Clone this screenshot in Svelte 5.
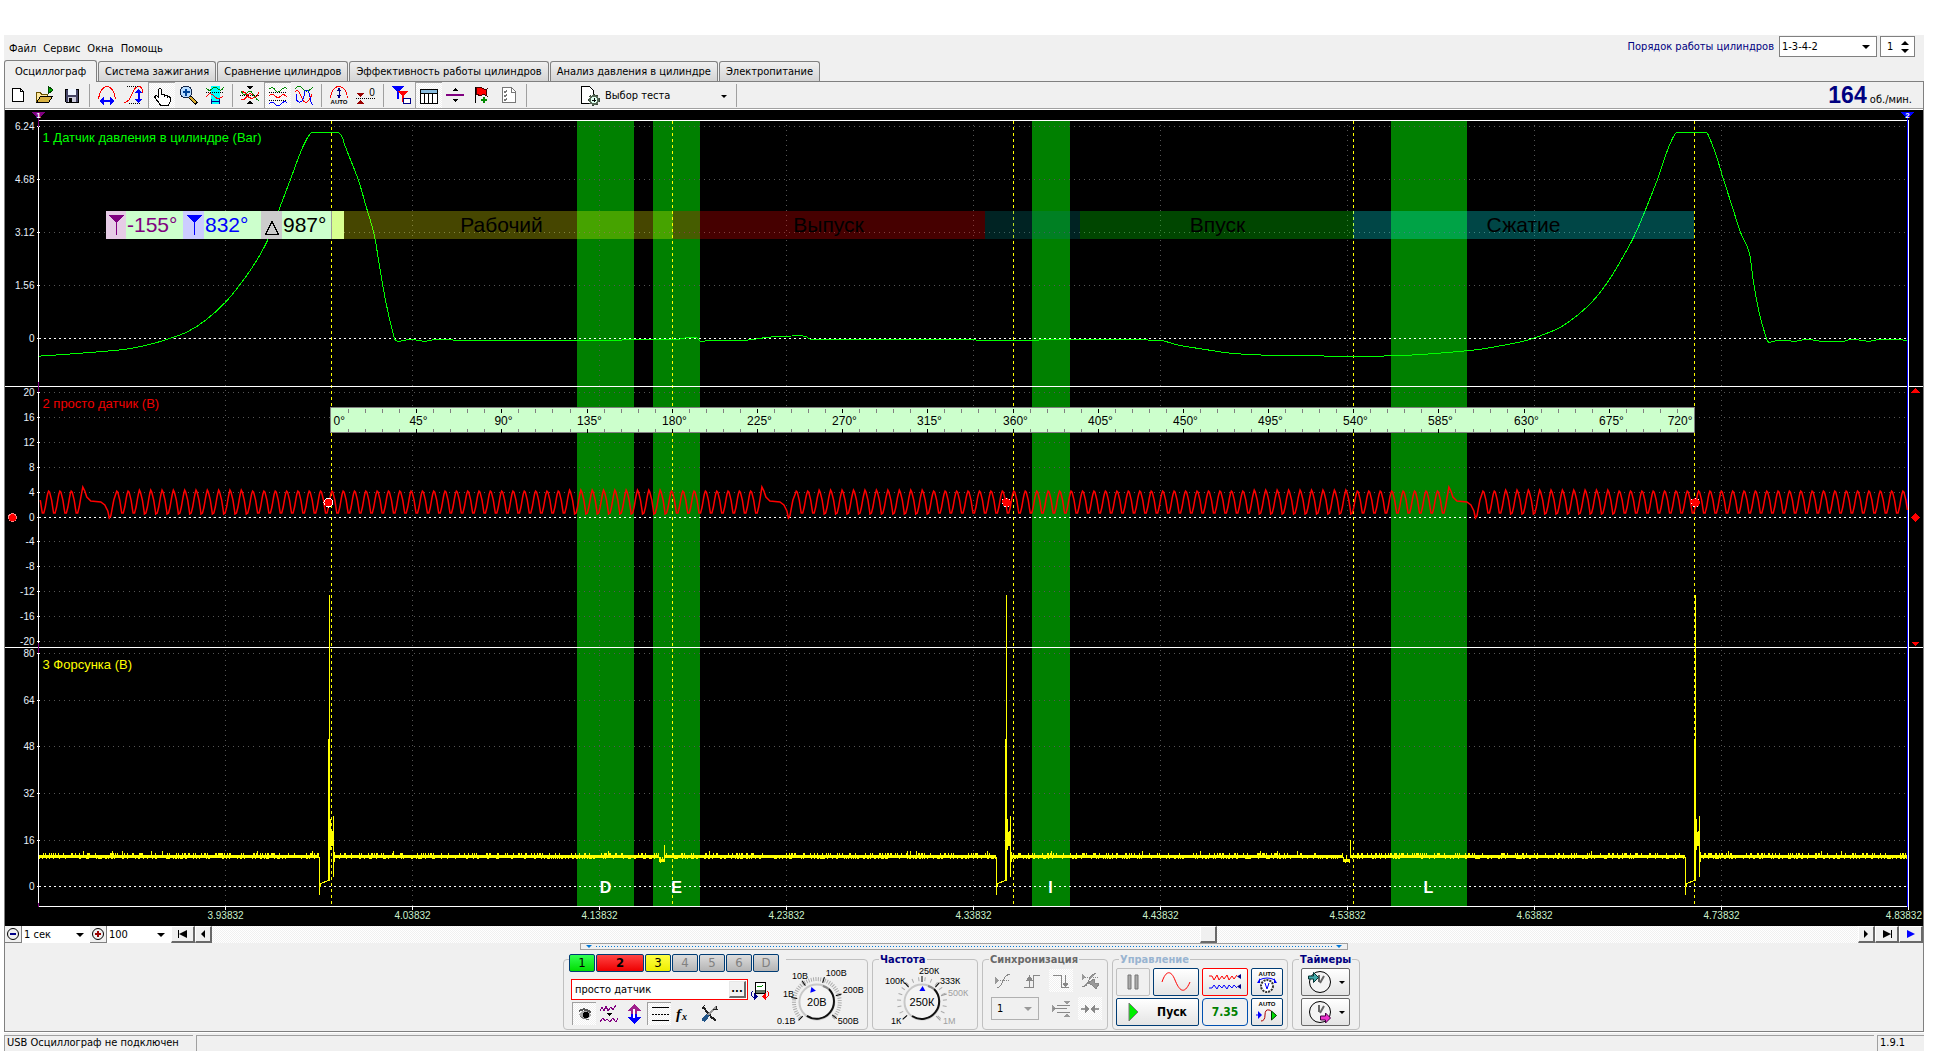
<script>
  let chartWidth = 1918;
  let chartHeight = 817;

  let activeTab = 0;
  let activeChannel = 2;
  let order = '1-3-4-2';
  let firstCylinder = 1;
  let channelName = 'просто датчик';
  let timeScale = '1 сек';
  let zoomScale = '100';
  let syncChannel = '1';

  const menu = ['Файл', 'Сервис', 'Окна', 'Помощь'];
  const tabs = [
    'Осциллограф',
    'Система зажигания',
    'Сравнение цилиндров',
    'Эффективность работы цилиндров',
    'Анализ давления в цилиндре',
    'Электропитание'
  ];

  const toolGroups = [
    [['new', 'Новый'], ['open', 'Открыть'], ['save', 'Сохранить']],
    [['width', 'Ширина'], ['height', 'Высота'], ['hand', 'Рука', true], ['zoom', 'Лупа'], ['zone', 'Зона']],
    [['cross', 'Совместить'], ['split', 'Разделить', true], ['overlay', 'Наложить']],
    [['auto', 'Авто'], ['zero', 'Ноль']],
    [['filter', 'Фильтр'], ['table', 'Таблица', true], ['level', 'Уровень'], ['flag', 'Метка'], ['list', 'Список']]
  ];

  const channels = [
    { id: '1', color: 'green' },
    { id: '2', color: 'red' },
    { id: '3', color: 'yellow' },
    { id: '4' },
    { id: '5' },
    { id: '6' },
    { id: 'D' }
  ];

  const channelTools = [['eye', 'Показать', true], ['noise', 'Шум'], ['updown', 'Сдвиг'], ['lines', 'Линии', true], ['fx', 'Функция'], ['tools', 'Настройки']];

  // icons, 20x20
  const icons = {
    new: '<path d="M4.5 3.5h8l3 3v10h-11z" fill="#fff" stroke="#000"/><path d="M12.5 3.5v3h3" fill="none" stroke="#000"/>',
    open: '<path d="M1.500 17.500V7.500h4l1 2h6v3" fill="#ffe9a0" stroke="#6b5200"/><path d="M1.500 17.500l4-6h12l-4 6z" fill="#d8b040" stroke="#000"/><path d="M13 1v8l5-4z" fill="#0a0" stroke="#040"/>',
    save: '<path d="M3 4h13v13H4l-1-1z" fill="#446" stroke="#000"/><path d="M6 4h8v6H6z" fill="#eef4ff"/><path d="M6 12h8v5H6z" fill="#ccd"/><path d="M7 13h3v4H7z" fill="#000"/>',
    width: '<path d="M1.500 14C2 9 5 1.500 10 1.500S18 9 18.500 14" fill="none" stroke="red"/><path d="M4 16h12" stroke="#00f" stroke-width="2"/><path d="M7 12v8l-5-4zM13 12v8l5-4z" fill="#00f"/>',
    height: '<path d="M0 17.500C9 17 7 1.500 15 1.500q3 0 4 6" fill="none" stroke="red"/><path d="M3 1.500h12M5 18.500h12" stroke="#000" stroke-dasharray="1 1"/><path d="M14.500 5v11" stroke="#00f" stroke-width="2"/><path d="M11 8h7l-3.500-4zM11 14h7l-3.500 4z" fill="#00f"/>',
    hand: '<path d="M6.500 12V3.500q1.500-2 3 0V9M9.500 9q1-2 3 0v1q1.500-1 3 0v1q2-1 3 1v3l-2 4h-8l-3-4-3-4q1-2 3-.5l1 1.500" fill="#fff" stroke="#000"/>',
    zoom: '<path d="M12 12l7 7" stroke="#000" stroke-width="4"/><path d="M12 12l6 6" stroke="#d9a92b" stroke-width="2"/><circle cx="8" cy="7" r="6" fill="#b8dcff" stroke="#124"/><path d="M8 3.500v7M4.500 7h7" stroke="#049" stroke-width="2"/>',
    zone: '<path d="M6 1h9v18H6z" fill="#0ff"/><path d="M1 3q3 4 6 1t6 0 6-2" fill="none" stroke="#080"/><path d="M1 7.500h18" stroke="#000" stroke-dasharray="1 1"/><path d="M1 12q4-6 8-1t9 0" fill="none" stroke="red"/><path d="M6.500 14v5M14.500 14v5M7 16.500h7" stroke="#008"/>',
    cross: '<path d="M1 7q4-1 6 3t6 3 6-6M1 13" fill="none" stroke="red"/><path d="M1 6q3 6 6 2t6 1 6 7" fill="none" stroke="#080"/><path d="M1 15q4 0 6-4t6-1" fill="none" stroke="red"/><path d="M0 10.500h20" stroke="#000" stroke-dasharray="1 1"/><path d="M7 1h6l-3 4zM7 19h6l-3-4z" fill="#000"/>',
    split: '<path d="M1 3q4-3 6 1t6 0 6-1" fill="none" stroke="#080"/><path d="M1 6.500h18M1 14.500h18" stroke="#000" stroke-dasharray="1 1"/><path d="M1 10q3-3 6 0t6 0 6 1" fill="none" stroke="red"/><path d="M1 18q3-4 6 0t6 0 6-1" fill="none" stroke="#00f"/>',
    overlay: '<path d="M1 4q4-5 8 0t10-2" fill="none" stroke="#080"/><path d="M1 7q3-4 6 4t6 6 5-8" fill="none" stroke="red"/><path d="M2 9q0 9 4 8t5-11q4-3 5 6t3 7" fill="none" stroke="#00f"/>',
    auto: '<path d="M1.500 13C2 7 5 1.500 10 1.500S18 7 18.500 13" fill="none" stroke="red"/><path d="M10 4v8" stroke="#008"/><path d="M7.500 6h5L10 2.500zM7.500 10h5L10 13.500z" fill="#008"/><text x="10" y="19" class="tiny">AUTO</text>',
    zero: '<path d="M0 13.500h19" stroke="#000" stroke-dasharray="1 1"/><path d="M1 8h7l-3.500 4zM1 19h7l-3.500-4z" fill="#900"/><text x="16" y="11" class="digit">0</text>',
    filter: '<path d="M1 1h12l-5 6v7H6V7z" fill="#00f"/><path d="M7 6h10l-4 5v6h-2v-6z" fill="red"/><path d="M12.500 13.500h7v5h-7z" fill="#fff" stroke="#008"/>',
    table: '<path d="M1.500 3.500h17v14h-17z" fill="#fff" stroke="#000"/><path d="M2 4h16v3H2z" fill="#8bd"/><path d="M1 7.500h18M5.500 7v10M9.500 7v10M13.500 7v10" stroke="#000"/>',
    level: '<path d="M1 9h18v2H1z" fill="#800080"/><path d="M7 6h6l-3-3zM7 14h6l-3 3z" fill="#000"/>',
    flag: '<path d="M3.500 2v16" stroke="#000"/><path d="M4 3q3-2 6 0t5 1l-1 4 1 3q-3-2-5-1t-6-1z" fill="red" stroke="#400"/><path d="M12 12v6M9 15h6" stroke="#080" stroke-width="2"/>',
    list: '<path d="M3.500 2.500h9l4 4v11h-13z" fill="#fff" stroke="#777"/><path d="M12 2v5h4M5 6l1 2 2-3M5 10l1 2 2-3M5 14l1 2 2-3" fill="none" stroke="#777"/>',
    test: '<path d="M1.500 .5h8l4 4v13h-12z" fill="#fff" stroke="#000"/><circle cx="14" cy="14" r="4" fill="#dfe" stroke="#565" stroke-width="2"/><circle cx="14" cy="14" r="5.500" fill="none" stroke="#343" stroke-dasharray="2 2"/><path d="M14 12v4M12 14h4" stroke="#000"/>',
    eye: '<path d="M4 10q6-7 12 1-3 5-9 4z" fill="#aaa"/><path d="M4 7q6-4 12 2" fill="none" stroke="#555" stroke-width="2"/><circle cx="11" cy="11" r="3" fill="#000"/><path d="M5 12q4 4 9 3" fill="none" stroke="#777"/>',
    noise: '<path d="M1 7l2-4 2 4 2-5 2 5 3-4 2 3 3-5M1 18l3-4 2 3 2-2 3 3 3-4 3 4 2-4" fill="none" stroke="#800080"/><path d="M7 9h6l-3 3z" fill="#000"/>',
    updown: '<path d="M10 0l7 7h-4v3H7V7H3z" fill="#a0208c"/><path d="M10 20l7-7h-4v-3H7v3H3z" fill="#00f"/><path d="M10 5v9" stroke="#fff" stroke-width="2"/>',
    lines: '<path d="M2 3.500h17M2 16.500h17" stroke="#000"/><path d="M2 10.500h17" stroke="#000" stroke-dasharray="2 1"/>',
    fx: '<text x="2" y="15" class="fx">f</text><text x="8" y="16" class="fx small">x</text>',
    tools: '<path d="M4 3l10 12M14 14l3 3" stroke="#222" stroke-width="2"/><path d="M17 3L8 12" stroke="#999" stroke-width="2"/><path d="M17 2v4M14 5h5M3 5l3-4" stroke="#222"/><path d="M9 11l-5 6" stroke="#258" stroke-width="4"/>',
    device: '<path d="M5.500 1.500h10v11h-10z" fill="#fff" stroke="#000"/><path d="M6 9h9v3H6z" fill="#676"/><path d="M7 6l2-1 2 1 2-2" fill="none" stroke="#080"/><path d="M3 10q-4 3 0 6h2" fill="none" stroke="#008"/><path d="M4 12v7l4-3.500z" fill="#008"/><path d="M17 10q4 3 0 6h-2" fill="none" stroke="red"/><path d="M16 12v7l-4-3.500z" fill="red"/>',
    edge: '<path d="M3 9.500h14" stroke="#888" stroke-dasharray="1 1"/><path d="M2 6v7l4-3z" fill="#999"/><path d="M4 17q4-1 6-7t7-7" fill="none" stroke="#888"/>',
    rise: '<path d="M2 16.500h9V4.500h7" fill="none" stroke="#888"/><path d="M7.500 7v9M5 9h5L7.500 5z" fill="#888" stroke="#888"/>',
    fall: '<path d="M2 4.500h8v12h8" fill="none" stroke="#888"/><path d="M14.500 4v9M12 12h5l-2.500 4z" fill="#888" stroke="#888"/>',
    bolt: '<path d="M2 3v6l4-3z" fill="#999"/><path d="M5 6.500h13" stroke="#888" stroke-dasharray="1 1"/><path d="M2 16q5 0 7-7t7-6M8 12l6-4 1 4 4 1-3 5-4-4z" fill="#999" stroke="#888"/>',
    limits: '<path d="M1 6v7l4-3zM13 2h6l-3 4zM13 18h6l-3-4z" fill="#999"/><path d="M6 6.500h13M6 13.500h13M2 9.500h14" stroke="#888"/>',
    merge: '<path d="M1 10h8M19 10h-8" stroke="#999" stroke-width="2"/><path d="M5 6v8l5-4zM15 6v8l-5-4z" fill="#888"/>'
  };

  const knobs = {
    volts: {
      value: '20В',
      pointer: -20,
      dense: true,
      labels: [
        ['0.1В', 2, 60, 225], ['1В', 8, 33, 280], ['10В', 17, 15, 325],
        ['100В', 51, 12, 17], ['200В', 68, 29, 72], ['500В', 63, 60, 130]
      ]
    },
    rate: {
      value: '250К',
      pointer: 2,
      dense: false,
      labels: [
        ['1К', 11, 60, 228], ['100К', 5, 20, 318], ['250К', 39, 10, 0],
        ['333К', 60, 20, 42], ['500К', 68, 32, 72, true], ['1М', 63, 60, 135, true]
      ]
    }
  };

  // plot geometry: 1870 samples between the first and the last time mark
  const SAMPLES = 1870;
  const LEFT = 33;
  $: kx = (chartWidth - 48) / SAMPLES;
  $: ky = chartHeight / 817;
  $: X = (s) => Math.round(LEFT + s * kx) + 0.5;
  $: Y = (v) => Math.round(v * ky) + 0.5;

  const panels = [
    { title: '1 Датчик давления в цилиндре (Bar)', color: '#00ff00', titleY: 31, zero: 228, first: 16, step: 53, marks: ['6.24', '4.68', '3.12', '1.56', '0'] },
    { title: '2 просто датчик (В)', color: '#f00000', titleY: 297, zero: 407, first: 282, step: 25, marks: ['20', '16', '12', '8', '4', '0', '-4', '-8', '-12', '-16', '-20'] },
    { title: '3 Форсунка (В)', color: '#ffff00', titleY: 559, zero: 777, first: 544, step: 46.6, marks: ['80', '64', '48', '32', '16', '0'] }
  ];
  const dividers = [276, 538];
  const times = ['3.93832', '4.03832', '4.13832', '4.23832', '4.33832', '4.43832', '4.53832', '4.63832', '4.73832', '4.83832'];

  const DEGREE_ZERO = 293;
  const angle = (deg) => DEGREE_ZERO + (deg * 1363) / 720;

  const zones = [
    { label: 'D', from: 539, to: 596 },
    { label: 'E', from: 615, to: 662 },
    { label: 'I', from: 994, to: 1032 },
    { label: 'L', from: 1353, to: 1429 }
  ];
  const strokes = [
    { label: 'Рабочий', from: 293, to: 635, color: '#ffff00', center: 463 },
    { label: 'Выпуск', from: 635, to: 947, color: '#ff0000', center: 790 },
    { label: '', from: 947, to: 1042, color: '#008080', center: 0 },
    { label: 'Впуск', from: 1042, to: 1315, color: '#00ff00', center: 1179 },
    { label: 'Сжатие', from: 1315, to: 1656, color: '#00ffff', center: 1485 }
  ];

  const pressure = [
    [0, 246], [29, 244], [55, 242], [87, 239], [112, 234], [132, 228], [150, 221], [167, 210], [187, 192], [204, 171],
    [217, 152], [230, 128], [241, 98], [252, 69], [262, 42], [268, 29], [273, 22], [275, 22], [299, 22], [301, 23],
    [304, 27], [306, 34], [320, 70], [327, 94], [336, 126], [342, 162], [347, 190], [353, 217], [357, 230], [366, 230],
    [372, 229], [386, 231], [398, 229], [420, 230], [577, 230], [600, 229], [640, 229], [645, 228], [657, 227], [662, 231],
    [672, 230], [707, 230], [730, 227], [747, 226], [767, 226], [772, 229], [932, 229], [940, 230], [1120, 230], [1140, 235],
    [1165, 239], [1192, 243], [1227, 245], [1330, 246], [1370, 245], [1400, 243], [1442, 239], [1485, 231], [1495, 228],
    [1520, 218], [1539, 205], [1555, 190], [1567, 175], [1579, 156], [1597, 123], [1619, 69], [1627, 45], [1634, 28],
    [1638, 22], [1640, 22], [1667, 22], [1669, 23], [1677, 43], [1685, 69], [1694, 97], [1702, 122], [1711, 143], [1715, 172],
    [1721, 204], [1728, 228], [1730, 232], [1735, 231], [1744, 230], [1757, 231], [1769, 229], [1782, 231], [1805, 231],
    [1813, 229], [1830, 231], [1842, 229], [1869, 230]
  ];

  // crank sensor: 60-2 wheel
  const turns = [[-634, 11.3], [44.3, 11.32], [723.4, 11.45], [1410.4, 11.35]];
  const gap = [[0, 377], [2, 381], [4, 387], [8, 391], [18, 392], [22, 395], [25, 401], [26.5, 408], [28, 406], [31, 390]];
  const crank = [];
  for (const [start, period] of turns) {
    gap.forEach(([dx, y]) => crank.push([start + dx, y]));
    for (let tooth = 3; tooth < 60; tooth++) {
      const peak = start + tooth * period;
      const grow = Math.sin(tooth / 6) > 0.7 ? 1 : 0;
      [[-1, 384], [0, 381 - grow], [1, 382], [3, 390], [4.500, 400], [5, 403 + grow], [6.500, 403], [8, 397], [9.500, 388]]
        .forEach(([dx, y]) => crank.push([peak + dx, y]));
    }
  }
  const crankVisible = crank.filter(([s]) => s >= 0 && s <= 1869);

  // injector: noisy battery level with three pulses
  const pulses = [281, 958, 1647];
  let seed = 7;
  const random = () => {
    seed = (seed * 16807) % 2147483647;
    return seed / 2147483647;
  };
  const level = [];
  for (let s = 1; s < 1869; s++) {
    if (pulses.some((p) => s >= p && s < p + 15)) continue;
    const r = random();
    const dip = (s > 620 && s < 627) || (s > 1304 && s < 1312) ? 4 : 0;
    const top = r > 0.985 ? 741 : r > 0.75 ? 743 : 745;
    const bottom = random() > 0.7 ? 749 : 748;
    level.push([s, top + dip, bottom + dip]);
  }
  level.push([626, 735, 750], [1312, 730, 748]);

  $: line = (points) => points.map(([s, y]) => `${LEFT + s * kx + 0.5},${y * ky + 0.5}`).join(' ');

  // Catmull-Rom through the points
  $: curve = (points) => {
    const p = points.map(([s, y]) => [LEFT + s * kx + 0.5, y * ky + 0.5]);
    let d = `M${p[0]}`;
    for (let i = 0; i < p.length - 1; i++) {
      const a = p[Math.max(i - 1, 0)];
      const b = p[i];
      const c = p[i + 1];
      const e = p[Math.min(i + 2, p.length - 1)];
      const limit = (c[0] - b[0]) / 3;
      const t1 = limit / Math.max(c[0] - a[0], 1);
      const t2 = limit / Math.max(e[0] - b[0], 1);
      d += `C${b[0] + limit} ${b[1] + (c[1] - a[1]) * t1} ${c[0] - limit} ${c[1] - (e[1] - b[1]) * t2} ${c}`;
    }
    return d;
  };

  $: levelPath = level.map(([s, a, b]) => `M${X(s)} ${Y(a)}V${Y(b)}`).join('');
  $: pulsePath = pulses
    .map((p) => `M${X(p)} ${Y(747)}V${Y(785)}M${X(p + 1)} ${Y(777)}V${Y(774)}L${X(p + 9)} ${Y(771)}M${X(p + 10)} ${Y(771)}V${Y(485)}M${X(p + 9)} ${Y(771)}V${Y(629)}M${X(p + 11)} ${Y(709)}V${Y(740)}M${X(p + 12)} ${Y(722)}V${Y(736)}M${X(p + 13)} ${Y(721)}V${Y(736)}M${X(p + 14)} ${Y(706)}V${Y(767)}M${X(p + 15)} ${Y(742)}V${Y(752)}`)
    .join('');

  const toothMarks = [290, 968, 1657];
</script>

{#snippet icon(name)}
  <svg class="icon" viewBox="0 0 20 20" aria-hidden="true">{@html icons[name]}</svg>
{/snippet}

{#snippet knob(k)}
  <svg class="knob" viewBox="0 0 92 66" role="img" aria-label={k.value}>
    {#each Array(k.dense ? 46 : 18) as _, i}
      <path d="M0 -21V-25" stroke="#aaa" transform="translate(42 38) rotate({-132 + i * (k.dense ? 5.9 : 15.500)})" />
    {/each}
    {#each k.labels as [text, x, y, turn, off]}
      <path d="M0 -20V-26" stroke={off ? '#999' : '#000'} transform="translate(42 38) rotate({turn})" />
      <text {x} {y} class:off>{text}</text>
    {/each}
    <circle cx="42" cy="38" r="17.500" fill="#f4f4f4" stroke="#c8c8c8" stroke-width="2" />
    <path d="M54 25A17.500 17.500 0 0 1 32 52" fill="none" stroke="#111" stroke-width="2" />
    <path d="M54 25A17.500 17.500 0 0 0 48 22" fill="none" stroke="#888" stroke-width="2" />
    <path d="M-3 -11h6l-3 -5z" fill="#00f" transform="translate(42 38) rotate({k.pointer})" />
    <text x="42" y="42" text-anchor="middle" class="value">{k.value}</text>
  </svg>
{/snippet}

<div class="app">
  <header>
    <nav>
      {#each menu as item}
        <button type="button">{item}</button>
      {/each}
    </nav>
    <div class="order">
      <label for="order">Порядок работы цилиндров</label>
      <span class="select order-select">
        <select id="order" bind:value={order}>
          <option>1-3-4-2</option>
          <option>1-2-4-3</option>
        </select>
      </span>
      <span class="spin">
        <input type="text" bind:value={firstCylinder} aria-label="Первый цилиндр" />
        <span class="arrows">
          <button type="button" class="up" aria-label="Больше" on:click={() => firstCylinder++}></button>
          <button type="button" class="down" aria-label="Меньше" on:click={() => firstCylinder--}></button>
        </span>
      </span>
    </div>
  </header>

  <div class="tabs" role="tablist">
    {#each tabs as tab, i}
      <button type="button" role="tab" aria-selected={i === activeTab} class:active={i === activeTab} on:click={() => (activeTab = i)}>{tab}</button>
    {/each}
  </div>

  <main>
    <div class="toolbar">
      {#each toolGroups as group}
        {#each group as [name, title, pressed]}
          <button type="button" class="tool" class:pressed aria-label={title}>{@render icon(name)}</button>
        {/each}
        <span class="sep"></span>
      {/each}
      <button type="button" class="test">
        {@render icon('test')}
        <span>Выбор теста</span>
        <i class="caret"></i>
      </button>
      <span class="sep"></span>
      <div class="rpm"><b>164</b> об./мин.</div>
    </div>

    <div class="chart" bind:clientWidth={chartWidth} bind:clientHeight={chartHeight}>
      <svg width={chartWidth} height={chartHeight}>
        {#each zones as zone}
          <rect x={X(zone.from) - 0.5} y={Y(11) - 0.5} width={(zone.to - zone.from) * kx} height={786 * ky} fill="#008000" />
        {/each}

        <g class="grid">
          {#each panels as panel}
            {#each panel.marks as mark, i}
              <path d="M{X(0) + 5} {Y(panel.first + i * panel.step)}H{X(1869)}" />
            {/each}
          {/each}
          {#each times as _, i}
            <path d="M{X((i + 1) * 187)} {Y(14)}V{Y(796)}" />
          {/each}
        </g>

        {#each panels as panel}
          <path class="zero" d="M{X(0)} {Y(panel.zero)}H{X(1869)}" />
        {/each}

        {#each [0, 180, 360, 540, 720] as deg}
          <path class="dead-center" d="M{X(angle(deg))} {Y(10)}V{Y(797)}" />
        {/each}

        <g class="axes">
          <path d="M{X(0)} {Y(10)}H{X(1870)}V{Y(797)}H{X(0)}Z" />
          {#each dividers as y}
            <path d="M0 {Y(y)}H{chartWidth}" />
          {/each}
          {#each panels as panel}
            {#each panel.marks as mark, i}
              <path d="M{X(-2)} {Y(panel.first + i * panel.step)}h3" />
            {/each}
          {/each}
          {#each times as _, i}
            <path d="M{X((i + 1) * 187)} {Y(797)}v3" />
          {/each}
        </g>
        <path class="cursor-one" d="M{X(0)} {Y(8)}v8M{X(0)} {Y(271)}v10M{X(0)} {Y(533)}v10M{X(0)} {Y(793)}v4" />
        <path class="cursor-two" d="M{X(1869)} {Y(8)}V{Y(797)}" />

        <path class="trace" d={curve(pressure)} stroke="#00ff00" />
        <polyline class="trace crank" points={line(crankVisible)} stroke="#ff0000" />
        <path class="trace" d={levelPath + pulsePath} stroke="#ffff00" />

        {#each toothMarks as s, i}
          <circle cx={X(s)} cy={Y(392)} r="4.500" fill="red" stroke="#fff" stroke-dasharray={i ? '1 3' : 'none'} />
        {/each}
        <circle cx="7.500" cy={Y(407)} r="4" fill="red" stroke="#f88" />

        <g fill="red">
          <path d="M{chartWidth - 12} {Y(282)}h9l-4.500 -5z" />
          <path d="M{chartWidth - 12} {Y(532)}h9l-4.500 5z" />
          <path d="M{chartWidth - 12} {Y(407)}l4.500 -4.500l4.500 4.500l-4.500 4.500z" />
        </g>

        {#each strokes as stroke}
          <rect x={X(stroke.from) - 0.5} y={Y(101) - 0.5} width={(stroke.to - stroke.from) * kx} height="28" fill={stroke.color} fill-opacity="0.275" />
          <text class="stroke" x={X(stroke.center)} y={Y(121)} text-anchor="middle">{stroke.label}</text>
        {/each}

        <!-- angle readout -->
        <g class="readout" transform="translate({X(68) - 0.5} {Y(101) - 0.5})">
          <rect width="226" height="28" fill="#ccffcc" />
          <rect x="226" width="12" height="28" fill="#d8ff90" />
          <rect width="20" height="28" fill="#e6cce6" />
          <rect x="77" width="21" height="28" fill="#ccccff" />
          <rect x="155" width="21" height="28" fill="#cccccc" />
          <path d="M3 4h15l-7 8v12h-1v-12z" fill="#800080" />
          <path d="M81 4h15l-7 8v12h-1v-12z" fill="#0000ff" />
          <path d="M159.500 23.500h13l-6.500 -13z" fill="none" stroke="#000" />
          <path d="M225.500 0v28" stroke="#999" />
          <text x="21" y="21" fill="#800080">-155°</text>
          <text x="99" y="21" fill="#0000ff">832°</text>
          <text x="177" y="21" fill="#000">987°</text>
        </g>

        <!-- degree ruler -->
        <rect x={X(292)} y={Y(297)} width={1364 * kx} height="25" fill="#ccffcc" stroke="#808080" />
        {#each Array(79) as _, i}
          <path d="M{X(angle((i + 1) * 9))} {Y(298)}v4m0 16v4" stroke={(i + 1) % 5 ? '#808080' : '#000'} />
        {/each}
        {#each Array(17) as _, i}
          <text
            class="degree"
            x={i === 0 ? X(295) : i === 16 ? X(1654) : X(angle(i * 45) + 2)}
            y={Y(314)}
            text-anchor={i === 0 ? 'start' : i === 16 ? 'end' : 'middle'}>{i * 45}°</text>
        {/each}

        {#each panels as panel}
          <text class="title" x={X(4)} y={Y(panel.titleY)} fill={panel.color}>{panel.title}</text>
          {#each panel.marks as mark, i}
            <text class="mark" x={X(-4)} y={Y(panel.first + i * panel.step) + 3} text-anchor="end">{mark}</text>
          {/each}
        {/each}
        {#each times as time, i}
          {@const last = i === times.length - 1}
          <text class="time" x={last ? chartWidth - 1 : X((i + 1) * 187)} y={Y(809)} text-anchor={last ? 'end' : 'middle'}>{time}</text>
        {/each}
        {#each zones as zone}
          <text class="zone" x={X((zone.from + zone.to) / 2) - 1} y={Y(783)} text-anchor="middle">{zone.label}</text>
        {/each}

        <path d="M{X(-7)} 2h14l-7 7z" fill="#800080" />
        <text class="flag" x={X(0)} y="8" text-anchor="middle">1</text>
        <path d="M{X(1862)} 2h14l-7 7z" fill="#0000ff" />
        <text class="flag" x={X(1869)} y="8" text-anchor="middle">2</text>
      </svg>
    </div>

    <div class="scroll">
      <button type="button" class="round" aria-label="Уменьшить">
        <svg viewBox="0 0 16 16"><circle cx="8" cy="8" r="5.500" /><path d="M5 8h6" stroke="#008" stroke-width="2" /></svg>
      </button>
      <span class="select flat wide">
        <select bind:value={timeScale} aria-label="Развёртка"><option>1 сек</option><option>2 сек</option></select>
      </span>
      <button type="button" class="round" aria-label="Увеличить">
        <svg viewBox="0 0 16 16"><circle cx="8" cy="8" r="5.500" /><path d="M5 8h6M8 5v6" stroke="#900" stroke-width="2" /></svg>
      </button>
      <span class="select flat">
        <select bind:value={zoomScale} aria-label="Масштаб"><option>100</option><option>200</option></select>
      </span>
      <button type="button" class="step long" aria-label="В начало"><svg viewBox="0 0 12 8"><path d="M1 0h1v8H1zM2 4l8-4v8z" /></svg></button>
      <button type="button" class="step" aria-label="Назад"><svg viewBox="0 0 12 8"><path d="M4 4l4-4v8z" /></svg></button>
      <div class="track"><span class="before"></span><span class="thumb"></span></div>
      <button type="button" class="step" aria-label="Вперёд"><svg viewBox="0 0 12 8"><path d="M8 4L4 0v8z" /></svg></button>
      <button type="button" class="step long" aria-label="В конец"><svg viewBox="0 0 12 8"><path d="M10 0h1v8h-1zM10 4L2 0v8z" /></svg></button>
      <button type="button" class="step long" aria-label="Пуск"><svg viewBox="0 0 12 8" fill="#00f"><path d="M10 4L2 0v8z" /></svg></button>
    </div>

    <div class="panel">
      <div class="splitter"><i></i><span></span><i></i></div>
      <div class="groups">
        <fieldset class="channel">
          <legend class="channels">
            {#each channels as channel, i}
              <button type="button" class={channel.color} class:current={i + 1 === activeChannel} disabled={!channel.color} on:click={() => (activeChannel = i + 1)}>{channel.id}</button>
            {/each}
          </legend>
          <div class="sensor">
            <div class="name-row">
              <span class="name">
                <input type="text" bind:value={channelName} aria-label="Датчик" />
                <button type="button" aria-label="Выбрать датчик">...</button>
              </span>
              <button type="button" class="plain" aria-label="Прибор">{@render icon('device')}</button>
            </div>
            <div class="channel-tools">
              {#each channelTools as [name, title, pressed]}
                <button type="button" class="plain" class:pressed aria-label={title}>{@render icon(name)}</button>
              {/each}
            </div>
          </div>
          {@render knob(knobs.volts)}
        </fieldset>

        <fieldset class="rate">
          <legend>Частота</legend>
          {@render knob(knobs.rate)}
        </fieldset>

        <fieldset class="sync">
          <legend>Синхронизация</legend>
          <div class="sync-row">
            <button type="button" class="plain" disabled aria-label="Уровень">{@render icon('edge')}</button>
            <button type="button" class="plain" disabled aria-label="По фронту">{@render icon('rise')}</button>
            <button type="button" class="plain dither" disabled aria-label="По спаду">{@render icon('fall')}</button>
            <button type="button" class="plain" disabled aria-label="Разовый">{@render icon('bolt')}</button>
          </div>
          <div class="sync-row">
            <span class="select sync-select">
              <select bind:value={syncChannel} disabled aria-label="Канал синхронизации"><option>1</option></select>
            </span>
            <button type="button" class="plain" disabled aria-label="Пределы">{@render icon('limits')}</button>
            <button type="button" class="plain dither" disabled aria-label="Сжать">{@render icon('merge')}</button>
          </div>
        </fieldset>

        <fieldset class="control">
          <legend>Управление</legend>
          <div class="control-row">
            <button type="button" class="big pause" disabled aria-label="Пауза">
              <svg width="12" height="16"><path d="M1 1h3v14h-3zM8 1h3v14h-3z" fill="#aaa" stroke="#777" /></svg>
            </button>
            <button type="button" class="big mid" aria-label="Сигнал">
              <svg width="30" height="20"><path d="M1 10C5 -2 10 -2 14 8S23 24 29 10" fill="none" stroke="red" /></svg>
            </button>
            <button type="button" class="big mid red-edge" aria-label="Запись">
              <svg width="34" height="20">
                <path d="M1 4h3l2 4 3-5 2 5 3-4 2 3 3-4 2 5 3-4 2 3 3-4" fill="none" stroke="red" />
                <path d="M1 16h3l2-3 3 4 2-4 3 3 2-3 3 4 2-4 3 3 2-3 3 3" fill="none" stroke="#00f" />
                <path d="M33 2v5l-4-2.500zM33 12v5l-4-2.500z" fill="#008" />
              </svg>
            </button>
            <button type="button" class="big small" aria-label="Авто диапазон">
              <svg width="24" height="24">
                <text x="12" y="6" class="tiny">AUTO</text>
                <path d="M4 10q8-4 16 0" fill="none" stroke="#00f" /><path d="M5 8v5H2zM19 8v5h3z" fill="#00f" />
                <circle cx="12" cy="16" r="6" fill="#fff" stroke="#333" stroke-dasharray="2 1" stroke-width="2" />
                <path d="M10 13l2 6 2-6" fill="none" stroke="#00f" />
              </svg>
            </button>
          </div>
          <div class="control-row">
            <button type="button" class="big start"><svg width="12" height="20"><path d="M1 1v18l9-9z" fill="#0e0" stroke="#777" /></svg><span>Пуск</span></button>
            <button type="button" class="big mid time-left">7.35</button>
            <button type="button" class="big small" aria-label="Авто пуск">
              <svg width="24" height="24">
                <text x="12" y="6" class="tiny">AUTO</text>
                <path d="M1 15h5" stroke="#00f" /><path d="M3 11v8l4-4z" fill="#00f" />
                <path d="M6 21q4 0 4-6t4-5q3 0 3 5" fill="none" stroke="#a00" />
                <path d="M16.500 11v9l5-4.500z" fill="#0d0" stroke="#030" />
              </svg>
            </button>
          </div>
        </fieldset>

        <fieldset class="timers">
          <legend>Таймеры</legend>
          <button type="button" class="big timer" aria-label="Таймер пуска">
            <svg width="26" height="24">
              <circle cx="13" cy="12" r="10.500" fill="#f4f4f4" stroke="#000" /><path d="M13 13l4-7M12 5v7" stroke="#666" stroke-width="2" />
              <path d="M1.500 6h5V2.500l5 5-5 5V9h-5z" fill="#4aa" stroke="#033" />
            </svg>
            <i class="caret"></i>
          </button>
          <button type="button" class="big timer" aria-label="Таймер остановки">
            <svg width="26" height="24">
              <circle cx="13" cy="12" r="10.500" fill="#f4f4f4" stroke="#000" /><path d="M13 13l4-7M12 5v7" stroke="#666" stroke-width="2" />
              <path d="M13.500 16h5v-3l5 5-5 5v-3h-5z" fill="#e3c" stroke="#404" />
            </svg>
            <i class="caret"></i>
          </button>
        </fieldset>
      </div>
    </div>
  </main>

  <footer>
    <span class="cell usb">USB Осциллограф не подключен</span>
    <span class="cell"></span>
    <span class="cell version">1.9.1</span>
  </footer>
</div>

<style>
  :global(body) {
    background: #fff;
  }

  .app {
    box-sizing: border-box;
    display: flex;
    flex-direction: column;
    height: calc(100vh - 40px);
    min-height: 640px;
    margin: 35px 12px 0 4px;
    background: #f0f0f0;
    color: #000;
    font: 11px/14px "DejaVu Sans Condensed", "DejaVu Sans", sans-serif;
  }

  button, input, select {
    box-sizing: border-box;
    margin: 0;
    padding: 0;
    border: none;
    background: none;
    color: inherit;
    font: inherit;
  }

  header {
    display: flex;
    justify-content: space-between;
    height: 24px;
  }

  nav {
    display: flex;
    gap: 7px;
    padding: 3px 0 0 5px;
    align-items: center;
  }

  .order {
    display: flex;
    align-items: flex-start;
    padding: 1px 9px 0 0;
  }

  .order label {
    margin: 4px 5px 0 0;
    color: #000080;
  }

  .select {
    position: relative;
    box-sizing: border-box;
    display: block;
    background: #fff;
  }

  .select select {
    width: 100%;
    height: 100%;
    padding: 0 2px;
    appearance: none;
  }

  .select::after {
    content: "";
    position: absolute;
    right: 6px;
    top: 50%;
    margin-top: -2px;
    border: 4px solid transparent;
    border-top-color: #000;
    border-bottom: none;
    pointer-events: none;
  }

  .order-select {
    width: 98px;
    height: 21px;
    border: 1px solid #808080;
  }

  .spin {
    display: flex;
    box-sizing: border-box;
    width: 35px;
    height: 21px;
    margin-left: 3px;
    border: 1px solid #808080;
    background: #fff;
  }

  .spin input {
    width: 20px;
    padding-left: 6px;
  }

  .arrows {
    display: flex;
    flex-direction: column;
    gap: 4px;
    justify-content: center;
  }

  .up, .down {
    border: 4px solid transparent;
  }

  .up {
    border-top: none;
    border-bottom-color: #000;
  }

  .down {
    border-bottom: none;
    border-top-color: #000;
  }

  .tabs {
    display: flex;
    align-items: flex-end;
    gap: 1px;
    height: 22px;
    border-bottom: 1px solid #808080;
  }

  .tabs button {
    height: 20px;
    padding: 0 6px;
    border: 1px solid #808080;
    border-bottom: none;
    border-radius: 3px 3px 0 0;
    background: linear-gradient(#f0f0f0, #d4d4d4);
    white-space: nowrap;
  }

  .tabs button.active {
    height: 22px;
    padding: 0 10px;
    margin-bottom: -1px;
    background: #f0f0f0;
  }

  main {
    display: flex;
    flex: 1;
    flex-direction: column;
    min-height: 0;
    border: 1px solid #808080;
    border-top: none;
    box-shadow: 0 1px #fff;
  }

  .toolbar {
    display: flex;
    align-items: center;
    height: 26px;
    border-bottom: 1px solid #a0a0a0;
    box-shadow: 0 1px #fff;
    margin-bottom: 1px;
  }

  .tool {
    display: grid;
    place-items: center start;
    width: 27px;
    height: 26px;
    padding-left: 3px;
  }

  .pressed, .dither {
    background: repeating-conic-gradient(#fff 0 25%, #f0f0f0 0 50%) 0 0 / 2px 2px;
  }

  .pressed {
    border-left: 1px solid #a0a0a0;
    border-top: 1px solid #a0a0a0;
  }

  .icon {
    width: 20px;
    height: 20px;
    shape-rendering: crispEdges;
  }

  .sep {
    width: 1px;
    height: 23px;
    margin: 0 4px 0 3px;
    background: #a0a0a0;
  }

  .test {
    display: flex;
    align-items: center;
    width: 202px;
    padding: 2px 6px 0 49px;
    gap: 5px;
    text-align: left;
  }

  .test span {
    flex: 1;
  }

  .caret {
    display: block;
    border: 3px solid transparent;
    border-top-color: #000;
    border-bottom: none;
  }

  .rpm {
    flex: 1;
    padding-right: 11px;
    text-align: right;
  }

  .rpm b {
    color: #000080;
    font: bold 23px/26px "Liberation Sans", Arial, sans-serif;
  }

  .chart {
    flex: 1;
    min-height: 0;
    overflow: hidden;
    background: #000;
  }

  .chart svg {
    display: block;
    shape-rendering: crispEdges;
    font-family: "Liberation Sans", Arial, sans-serif;
  }

  .grid path {
    stroke: #555;
    stroke-dasharray: 1 4;
  }

  .zero {
    stroke: #fff;
    stroke-dasharray: 2 3;
  }

  .dead-center {
    stroke: #ff0;
    stroke-dasharray: 3 3;
  }

  .axes path {
    fill: none;
    stroke: #fff;
  }

  .cursor-one {
    stroke: #800080;
  }

  .cursor-two {
    stroke: #00f;
  }

  .trace {
    fill: none;
  }

  .crank {
    shape-rendering: auto;
    stroke-width: 1.5;
  }

  .stroke, .readout text {
    font-size: 21px;
  }

  .degree {
    font-size: 12px;
  }

  .title {
    font-size: 13px;
  }

  .mark, .time {
    font-size: 10px;
    fill: #e8f0f8;
  }

  .time {
    fill: #ccf0cc;
  }

  .zone {
    font-size: 16px;
    font-weight: bold;
    fill: #fff;
  }

  .flag {
    font-size: 8px;
    font-weight: bold;
    fill: #fff;
  }

  .scroll {
    display: flex;
    height: 17px;
  }

  .round {
    width: 17px;
    border-right: 1px solid #808080;
    border-bottom: 1px solid #808080;
  }

  .round svg {
    display: block;
    fill: none;
    stroke: #000;
  }

  .flat {
    width: 64px;
  }

  .flat.wide {
    width: 68px;
  }

  .step {
    display: grid;
    place-items: center;
    width: 17px;
    border: 1px solid #fff;
    border-right: 2px solid #696969;
    border-bottom: 2px solid #696969;
  }

  .step.long {
    width: 24px;
  }

  .step svg {
    width: 12px;
    height: 8px;
  }

  .track {
    display: flex;
    flex: 1;
    background: repeating-conic-gradient(#fff 0 25%, #f0f0f0 0 50%) 0 0 / 2px 2px;
  }

  .before {
    width: 60%;
  }

  .thumb {
    box-sizing: border-box;
    width: 17px;
    border: 1px solid #fff;
    border-right: 2px solid #696969;
    border-bottom: 2px solid #696969;
    background: #f0f0f0;
  }

  .panel {
    height: 88px;
  }

  .splitter {
    box-sizing: border-box;
    display: flex;
    align-items: center;
    gap: 4px;
    width: 40%;
    height: 7px;
    margin: 0 auto;
    padding: 0 5px;
    border: 1px solid #a0a0a0;
  }

  .splitter i {
    border: 3px solid transparent;
    border-top-color: #0078d7;
    border-bottom: none;
  }

  .splitter span {
    flex: 1;
    height: 1px;
    background: repeating-linear-gradient(90deg, #0078d7 0 1px, transparent 1px 3px);
  }

  .groups {
    display: flex;
    justify-content: center;
    gap: 4px;
    padding: 4px 5px 0 0;
  }

  fieldset {
    box-sizing: border-box;
    height: 76px;
    min-width: 0;
    margin: 0;
    padding: 0;
    border: 1px solid #c0c0c0;
    border-radius: 4px;
  }

  legend {
    height: 10px;
    margin-left: 6px;
    padding: 0 1px;
    color: #000080;
    font: bold 11px/12px "DejaVu Sans Condensed", "DejaVu Sans", sans-serif;
    white-space: nowrap;
  }

  .channel {
    display: flex;
    width: 305px;
  }

  .channels {
    display: flex;
    gap: 1px;
    margin-left: 5px;
    padding: 0 7px 0 0;
    font-weight: normal;
  }

  .channels button {
    width: 26px;
    height: 18px;
    border: 1px solid #003c74;
    border-radius: 2px;
    background: linear-gradient(#ddd, #b4b4b4);
    color: #808080;
    font: 13px/14px "DejaVu Sans Condensed", "DejaVu Sans", sans-serif;
  }

  .channels .green {
    background: linear-gradient(#3f5, #0d0);
    color: #000;
  }

  .channels .red {
    background: linear-gradient(#f44, #e00);
    color: #000;
  }

  .channels .yellow {
    background: linear-gradient(#ff4, #ee0);
    color: #000;
  }

  .channels .current {
    width: 48px;
    font-weight: bold;
  }

  .sensor {
    width: 205px;
    padding: 15px 0 0 7px;
  }

  .name-row {
    display: flex;
  }

  .name {
    display: flex;
    box-sizing: border-box;
    width: 177px;
    height: 21px;
    padding: 1px;
    border: 1px solid #f00;
    background: #fff;
  }

  .name input {
    flex: 1;
    min-width: 0;
    padding-left: 2px;
  }

  .name button {
    width: 17px;
    border: 1px solid #e8e8e8;
    border-right: 2px solid #696969;
    border-bottom: 2px solid #696969;
    background: #f0f0f0;
    font-weight: bold;
    line-height: 8px;
  }

  .plain {
    display: grid;
    place-items: center;
    width: 24px;
    height: 23px;
  }

  .channel-tools {
    display: flex;
    gap: 1px;
    padding-left: 1px;
  }

  .knob {
    width: 92px;
    height: 66px;
    font: 9px "Liberation Sans", Arial, sans-serif;
  }

  .knob .off {
    fill: #a0a0a0;
  }

  .knob .value {
    font-size: 11px;
  }

  .rate {
    width: 106px;
  }

  .rate .knob {
    display: block;
    margin-left: 7px;
  }

  .sync {
    width: 126px;
  }

  .sync legend {
    color: #696969;
  }

  .sync-row {
    display: flex;
    align-items: center;
    gap: 5px;
    padding: 5px 0 0 8px;
  }

  .sync-select {
    width: 48px;
    height: 23px;
    margin-right: 5px;
    border: 1px solid #b0b0b0;
    background: #f0f0f0;
  }

  .sync-select::after {
    border-top-color: #999;
  }

  .sync-select select {
    padding-left: 5px;
    color: #000;
    opacity: 1;
  }

  .control {
    width: 176px;
  }

  .control legend {
    color: #99b4d1;
  }

  .control-row {
    display: flex;
    gap: 2px;
    padding: 2px 0 0 3px;
  }

  .big {
    display: flex;
    align-items: center;
    justify-content: center;
    height: 28px;
    border: 1px solid #003c74;
    border-radius: 2px;
    background: linear-gradient(#fff, #e4e4e4);
  }

  .pause {
    width: 34px;
    border-color: #c0c0c0;
    background: #f0f0f0;
  }

  .mid {
    width: 46px;
    margin-left: 1px;
  }

  .small {
    width: 32px;
    margin-left: 1px;
  }

  .red-edge {
    border-color: #f00;
  }

  .start {
    width: 83px;
    gap: 17px;
    font-size: 12px;
    font-weight: bold;
  }

  .time-left {
    border-color: #0050b0;
    border-radius: 4px;
    background: #f0f0f0;
    color: #008000;
    font-size: 12px;
    font-weight: bold;
  }

  .timers {
    width: 68px;
  }

  .control-row:first-of-type, .timer:first-of-type {
    padding-top: 4px;
  }

  .timer {
    width: 49px;
    gap: 6px;
    margin: 4px 0 0 8px;
    border-color: #696969;
  }

  .timer:first-of-type {
    padding-top: 0;
  }

  .timer ~ .timer {
    margin-top: 2px;
  }

  .app :global(.tiny) {
    font: bold 6px "Liberation Sans", Arial, sans-serif;
    text-anchor: middle;
  }

  .app :global(.digit) {
    font: 10px "Liberation Sans", Arial, sans-serif;
    text-anchor: middle;
  }

  .app :global(.fx) {
    font: italic bold 15px "Liberation Serif", serif;
  }

  .app :global(.fx.small) {
    font-size: 10px;
  }

  footer {
    display: flex;
    gap: 3px;
    height: 16px;
    padding-top: 3px;
  }

  .cell {
    flex: 1;
    padding-left: 2px;
    border-top: 1px solid #a0a0a0;
    border-left: 1px solid #a0a0a0;
    white-space: nowrap;
  }

  .usb {
    flex: 0 0 186px;
  }

  .version {
    flex: 0 0 44px;
  }
</style>
